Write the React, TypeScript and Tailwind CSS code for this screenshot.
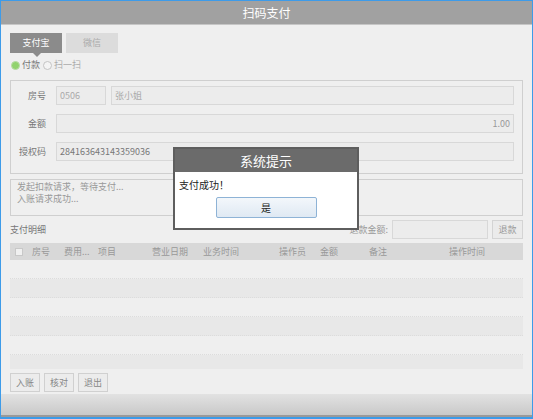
import React from "react";

const font = { fontFamily: '"Noto Sans CJK SC", "Liberation Sans", sans-serif' };

const columns = [
  { label: "房号", w: "w-[32px]" },
  { label: "费用...", w: "w-[34px]" },
  { label: "项目", w: "w-[54px]" },
  { label: "营业日期", w: "w-[51px]" },
  { label: "业务时间", w: "w-[76px]" },
  { label: "操作员", w: "w-[41px]" },
  { label: "金额", w: "w-[49px]" },
  { label: "备注", w: "w-[80px]" },
  { label: "操作时间", w: "w-[60px]" },
];

function Field({ label, children }: { label: string; children: React.ReactNode }) {
  return (
    <div className="flex items-center h-[19px]">
      <div className="w-[35px] text-right text-[9px] text-[#777] shrink-0">{label}</div>
      <div className="flex-1 flex gap-[5px] ml-[10px] h-full">{children}</div>
    </div>
  );
}

export default function App() {
  const rows = [0, 1, 2, 3, 4, 5];
  return (
    <div
      style={font}
      className="relative w-[533px] h-[419px] border border-b-2 border-[#3d9be9] bg-[#efefef] flex flex-col overflow-hidden"
    >
      {/* title */}
      <div className="h-[24px] shrink-0 bg-[#a1a1a1] border-b border-[#c6c6c6] flex items-center justify-center text-white text-[12px]">
        扫码支付
      </div>

      <div className="flex-1 flex flex-col px-[9px]">
        {/* tabs */}
        <div className="mt-[8px] flex gap-[4px] h-[20px]">
          <div className="relative w-[52px] h-full bg-[#8b8b8b] text-white text-[9px] flex items-center justify-center">
            支付宝
            <div className="absolute left-[23px] -bottom-[4px] w-0 h-0 border-l-[4px] border-r-[4px] border-t-[4px] border-l-transparent border-r-transparent border-t-[#8b8b8b]" />
          </div>
          <div className="w-[52px] h-full bg-[#dcdcdc] text-[#aaa] text-[9px] flex items-center justify-center">
            微信
          </div>
        </div>

        {/* radio */}
        <div className="mt-[6px] flex items-center h-[12px] text-[9px]">
          <span className="w-[9px] h-[9px] rounded-full bg-[#92d36e] border border-[#b8dca5] ml-[1px]" />
          <span className="ml-[2px] text-[#777]">付款</span>
          <span className="ml-[3px] w-[9px] h-[9px] rounded-full bg-[#f4f4f4] border border-[#c4c4c4]" />
          <span className="ml-[2px] text-[#aaa]">扫一扫</span>
        </div>

        {/* form */}
        <div className="mt-[9px] h-[94px] border border-[#cfcfcf] flex flex-col gap-[9px] pt-[5px] pr-[8px]">
          <Field label="房号">
            <div className="w-[50px] border border-[#d8d8d8] bg-[#ececec] text-[9px] text-[#aaa] flex items-center px-[3px]">0506</div>
            <div className="flex-1 border border-[#d8d8d8] bg-[#ececec] text-[9px] text-[#aaa] flex items-center px-[3px]">张小姐</div>
          </Field>
          <Field label="金额">
            <div className="flex-1 border border-[#d8d8d8] bg-[#ececec] text-[9px] text-[#999] flex items-center justify-end px-[3px]">1.00</div>
          </Field>
          <Field label="授权码">
            <div className="flex-1 border border-[#d8d8d8] bg-[#ececec] text-[9px] text-[#777] flex items-center px-[3px]">284163643143359036</div>
          </Field>
        </div>

        {/* message */}
        <div className="mt-[5px] h-[37px] border border-[#cfcfcf] px-[6px] pt-[1px] text-[9px] leading-[12px] text-[#999]">
          <div>发起扣款请求，等待支付...</div>
          <div>入账请求成功...</div>
        </div>

        {/* detail header */}
        <div className="mt-[4px] h-[19px] flex items-center text-[9px]">
          <span className="text-[#777]">支付明细</span>
          <span className="ml-auto text-[#999]">退款金额:</span>
          <div className="ml-[4px] w-[96px] h-full border border-[#d8d8d8] bg-[#ececec]" />
          <div className="ml-[4px] w-[31px] h-full border border-[#d4d4d4] bg-[#ebebeb] text-[#999] flex items-center justify-center">退款</div>
        </div>

        {/* table */}
        <div className="mt-[4px] h-[17px] bg-[#d8d8d8] flex items-center text-[9px] text-[#999]">
          <span className="ml-[5px] w-[8px] h-[8px] bg-[#f0f0f0] border border-[#c8c8c8]" />
          <div className="ml-[9px] flex">
            {columns.map((c) => (
              <span key={c.label} className={c.w}>{c.label}</span>
            ))}
          </div>
        </div>
        <div className="h-[109px] flex flex-col overflow-hidden">
          {rows.map((r) => (
            <div
              key={r}
              className={`h-[19px] shrink-0 border-b border-dotted border-[#dcdcdc] ${r % 2 === 0 ? "bg-[#efefef]" : "bg-[#e8e8e8]"}`}
            />
          ))}
        </div>

        {/* buttons */}
        <div className="mt-[4px] flex gap-[4px] h-[19px] text-[9px] text-[#888]">
          {["入账", "核对", "退出"].map((b) => (
            <div key={b} className="w-[30px] border border-[#d0d0d0] bg-[#ececec] flex items-center justify-center">{b}</div>
          ))}
        </div>
      </div>

      {/* bottom bar */}
      <div className="h-[23px] shrink-0 bg-gradient-to-b from-[#e2e2e2] to-[#c9c9c9] border-b-2 border-[#9a9a9a]" />

      {/* dialog */}
      <div className="absolute left-[172px] top-[146px] w-[186px] h-[83px] border-2 border-[#5e5e5e] bg-white flex flex-col">
        <div className="h-[23px] bg-[#6b6b6b] text-white text-[13px] flex items-center justify-center">系统提示</div>
        <div className="pl-[4px] pt-[6px] text-[10px] text-[#222] leading-[14px]">支付成功！</div>
        <div className="mt-[5px] mx-auto w-[101px] h-[21px] border border-[#8eb3d6] rounded-[2px] bg-gradient-to-b from-[#f3f7fb] to-[#dfe9f3] text-[10px] text-[#222] flex items-center justify-center">
          是
        </div>
      </div>
    </div>
  );
}
